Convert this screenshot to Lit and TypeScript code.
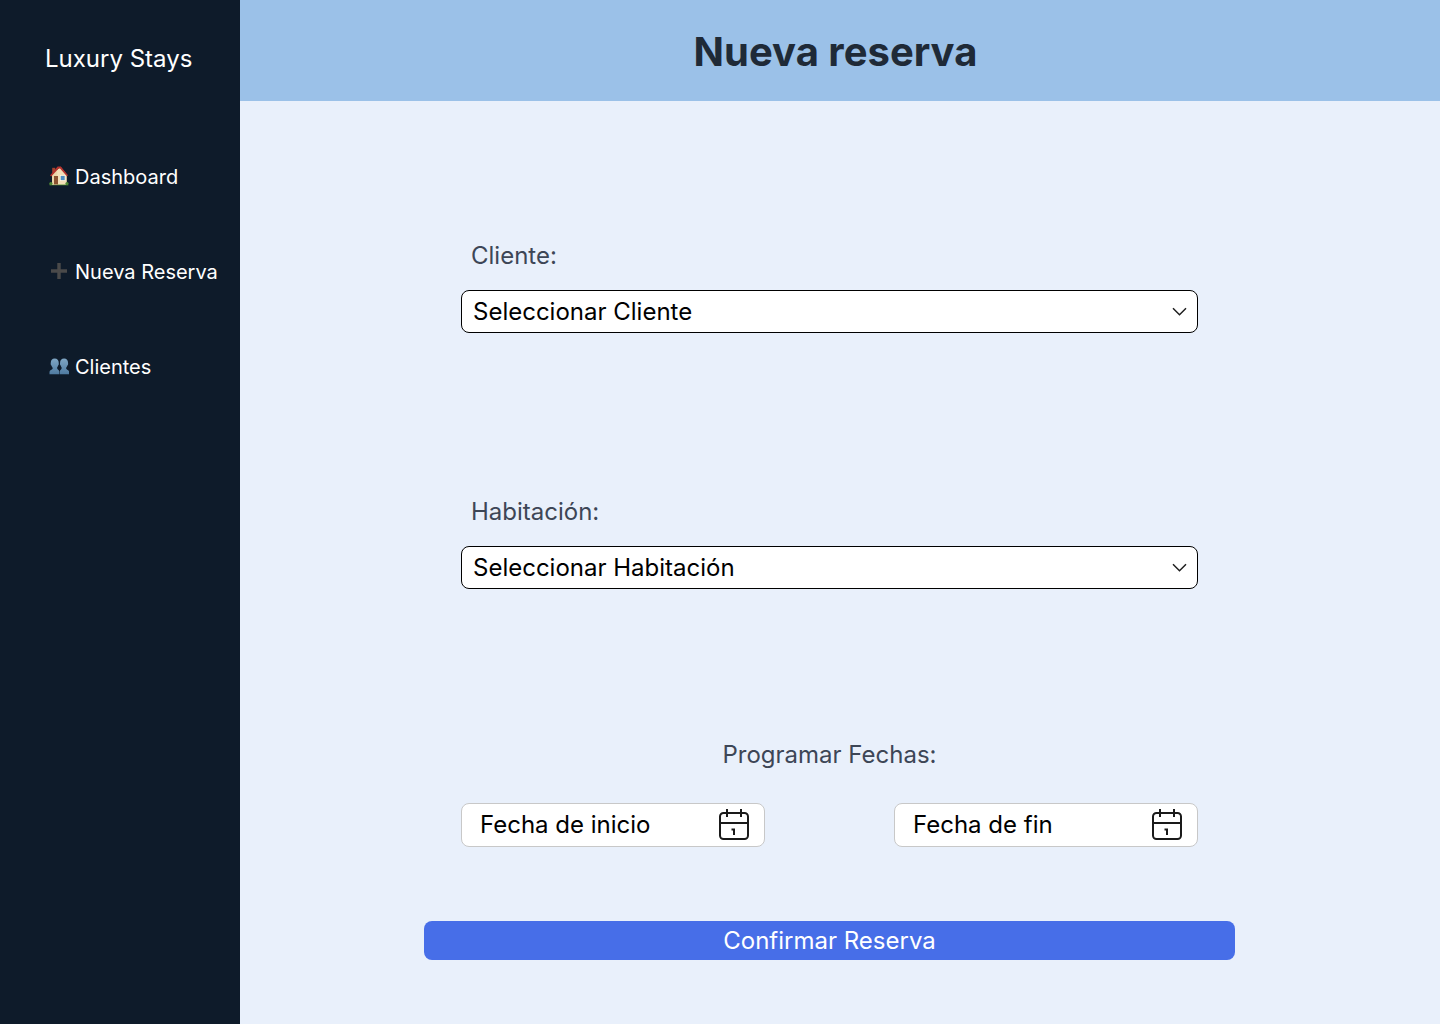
import { LitElement, css, html, svg } from "lit";
import { customElement, property, state } from "lit/decorators.js";

const house = svg`
  <path d="M1 17.500h17.500l1 1.700H.5z" fill="#5f9a3c"/>
  <path d="M3.200 1.800h3v5h-3z" fill="#a8432f"/>
  <path d="M3 8.400 11.500.8l6.300 8v9.600H3z" fill="#f3dfb8"/>
  <path d="M3 8.400 8.200 3v15.400H3z" fill="#ecd5a8"/>
  <path d="M1 9.400 8.600.4h3.200l7.200 8.800-1.100 1L11 2.600 9.400 2.800 2.300 10.400z" fill="#b5322d"/>
  <path d="M5 10h4v8.400H5z" fill="#8a5230"/>
  <path d="M11 9.200h5.400v5.600H11z" fill="#fff6df"/>
  <path d="M11.700 9.900h4v4.200h-4z" fill="#4f8fc4"/>
  <circle cx="1.900" cy="17.600" r="1.600" fill="#4e8a35"/>
  <circle cx="18" cy="17.600" r="1.600" fill="#4e8a35"/>`;

const plus = svg`<path d="M8.300 2h3.400v6.300H18v3.400h-6.300V18H8.300v-6.300H2V8.300h6.300z" fill="#4a4a4a"/>`;

const people = svg`
  <defs>
    <linearGradient id="shade" x1="0" y1="0" x2="0" y2="1">
      <stop offset="0" stop-color="#7fa6c4"/>
      <stop offset="1" stop-color="#4f7ba1"/>
    </linearGradient>
  </defs>
  <path fill="url(#shade)" d="M5.700 2.500C8.300 2.500 9.700 4.200 9.700 6.500c0 .8.200 1 .1 1.700-.1.800-.6.900-.8 1.600-.3 1-.9 1.500-.9 2.300 0 1.600 2.200 1.700 2.200 3.500V18.200H.5v-1.800c0-2.600 3.200-2.400 3.200-4.100 0-.8-.9-1.500-1.200-2.500-.2-.7-.7-.8-.8-1.600-.1-.7.1-.9.100-1.700C1.800 4.200 3.100 2.500 5.700 2.500z"/>
  <path fill="url(#shade)" d="M15.100 2.500c-2.600 0-4 1.700-4 4 0 .8-.2 1-.1 1.700.1.800.6.900.8 1.600.3 1 .9 1.500.9 2.300 0 1.600-1.900 1.700-1.900 3.500v2.600h9.500v-1.800c0-2.600-3.200-2.400-3.200-4.100 0-.8.900-1.500 1.200-2.500.2-.7.7-.8.800-1.600.1-.7-.1-.9-.1-1.700 0-2.300-1.300-4-3.900-4z"/>`;

@customElement("side-nav")
export class SideNav extends LitElement {
  static styles = css`
    :host {
      display: block;
      box-sizing: border-box;
      padding: 44px 0 0 45px;
      background: #0e1b2a;
      color: #fff;
    }
    .brand {
      font-size: 24px;
      line-height: 30px;
    }
    .links {
      display: grid;
      gap: 65px;
      margin: 88px 0 0;
      padding: 0 0 0 4px;
      list-style: none;
    }
    .link {
      display: flex;
      align-items: center;
      gap: 6px;
      color: inherit;
      font-size: 20px;
      line-height: 30px;
      white-space: nowrap;
      text-decoration: none;
    }
    .icon {
      flex: none;
      width: 20px;
      height: 20px;
      margin-bottom: 2px;
    }
  `;

  private items = [
    { label: "Dashboard", icon: house },
    { label: "Nueva Reserva", icon: plus },
    { label: "Clientes", icon: people },
  ];

  render() {
    return html`
      <div class="brand">Luxury Stays</div>
      <nav>
        <ul class="links">
          ${this.items.map(
            (item) => html`<li>
              <a class="link" href="#">
                <svg class="icon" viewBox="0 0 20 20" aria-hidden="true">${item.icon}</svg>
                ${item.label}
              </a>
            </li>`
          )}
        </ul>
      </nav>
    `;
  }
}

@customElement("select-field")
export class SelectField extends LitElement {
  @property() label = "";
  @property() placeholder = "";
  @property({ attribute: false }) options: string[] = [];

  static styles = css`
    :host {
      display: grid;
      gap: 19px;
    }
    .label {
      padding-left: 10px;
      color: #3d4656;
      font-size: 24px;
      line-height: 30px;
    }
    .box {
      display: grid;
      align-items: center;
    }
    .select,
    .chevron {
      grid-area: 1 / 1;
    }
    .select {
      appearance: none;
      box-sizing: border-box;
      width: 100%;
      height: 43px;
      margin: 0;
      padding: 0 40px 0 11px;
      border: 1px solid #000;
      border-radius: 8px;
      background: #fff;
      color: #000;
      font: inherit;
      font-size: 24px;
    }
    .chevron {
      justify-self: end;
      width: 16px;
      height: 16px;
      margin-right: 10px;
      pointer-events: none;
    }
  `;

  render() {
    return html`
      <label class="label" for="control">${this.label}</label>
      <div class="box">
        <select class="select" id="control">
          <option value="">${this.placeholder}</option>
          ${this.options.map((o) => html`<option>${o}</option>`)}
        </select>
        <svg class="chevron" viewBox="0 0 16 16" fill="none" stroke="#1e1e1e" stroke-width="1.5" aria-hidden="true">
          <path d="M1 4.200 7.500 10.700 14 4.200" />
        </svg>
      </div>
    `;
  }
}

@customElement("date-field")
export class DateField extends LitElement {
  @property() label = "";

  static styles = css`
    :host {
      display: block;
    }
    .box {
      display: flex;
      align-items: center;
      box-sizing: border-box;
      height: 44px;
      padding: 0 14px 0 18px;
      border: 1px solid #c8c8c8;
      border-radius: 8px;
      background: #fff;
    }
    .input {
      flex: 1;
      min-width: 0;
      margin: 0;
      padding: 0;
      border: 0;
      outline: 0;
      background: none;
      color: #000;
      font: inherit;
      font-size: 24px;
      line-height: 30px;
    }
    .input::placeholder {
      color: #000;
      opacity: 1;
    }
    .open {
      flex: none;
      display: block;
      margin: 0;
      padding: 0;
      border: 0;
      background: none;
      cursor: pointer;
    }
    .icon {
      display: block;
      width: 32px;
      height: 32px;
    }
  `;

  render() {
    return html`
      <div class="box">
        <input class="input" type="text" aria-label=${this.label} placeholder=${this.label} />
        <button class="open" type="button" aria-label=${"Abrir calendario: " + this.label}>
          <svg class="icon" viewBox="0 0 32 32" fill="none" stroke="#1a1a1a" stroke-width="2" aria-hidden="true">
            <rect x="2" y="4" width="28" height="26" rx="3.500" />
            <path d="M2 14h28M9 0v8M23 0v8" />
            <path d="M13.500 20.500H16V26" />
          </svg>
        </button>
      </div>
    `;
  }
}

@customElement("app-root")
export class AppRoot extends LitElement {
  @state() private clients = ["Ana García", "Luis Pérez"];
  @state() private rooms = ["Habitación 101", "Habitación 102"];

  static styles = css`
    :host {
      display: grid;
      grid-template-columns: 240px minmax(0, 1fr);
      min-height: 100vh;
      background: #e9f0fb;
      font-family: Inter, "Liberation Sans", sans-serif;
    }
    .header {
      display: flex;
      align-items: center;
      justify-content: center;
      box-sizing: border-box;
      height: 101px;
      padding: 2px 9px 0 0;
      background: #9bc1e8;
    }
    .title {
      margin: 0;
      color: #1f2a37;
      font-size: 40px;
      line-height: 48px;
      font-weight: 700;
    }
    .form {
      display: flex;
      flex-direction: column;
      max-width: 811px;
      margin: 0 auto;
      padding: 140px 21px 64px 0;
    }
    .fields {
      display: grid;
      gap: 164px;
      padding: 0 37px;
    }
    .dates {
      display: grid;
      grid-template-columns: 304px 304px;
      justify-content: space-between;
      row-gap: 33px;
      margin: 151px 0 0;
      padding: 0 37px;
    }
    .caption {
      grid-column: 1 / -1;
      color: #3d4656;
      font-size: 24px;
      line-height: 30px;
      text-align: center;
    }
    .confirm {
      height: 39px;
      margin: 74px 0 0;
      padding: 0;
      border: 0;
      border-radius: 8px;
      background: #476ee8;
      color: #fff;
      font: inherit;
      font-size: 24px;
      cursor: pointer;
    }
  `;

  render() {
    return html`
      <side-nav></side-nav>
      <main>
        <header class="header"><h1 class="title">Nueva reserva</h1></header>
        <form class="form" @submit=${(e: Event) => e.preventDefault()}>
          <div class="fields">
            <select-field label="Cliente:" placeholder="Seleccionar Cliente" .options=${this.clients}></select-field>
            <select-field label="Habitación:" placeholder="Seleccionar Habitación" .options=${this.rooms}></select-field>
          </div>
          <div class="dates" role="group" aria-labelledby="dates-caption">
            <div class="caption" id="dates-caption">Programar Fechas:</div>
            <date-field label="Fecha de inicio"></date-field>
            <date-field label="Fecha de fin"></date-field>
          </div>
          <button class="confirm" type="submit">Confirmar Reserva</button>
        </form>
      </main>
    `;
  }
}
